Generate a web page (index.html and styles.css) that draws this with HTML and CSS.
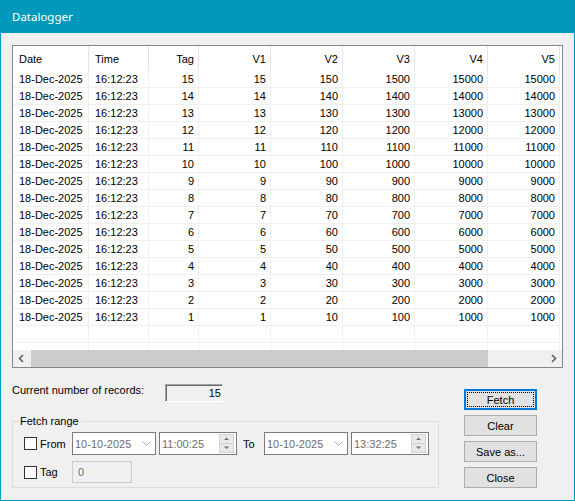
FILE: index.html
```html
<!DOCTYPE html>
<html>
<head>
<meta charset="utf-8">
<title>Datalogger</title>
<link rel="stylesheet" href="styles.css">
</head>
<body>
<div class="window">
  <div class="titlebar">Datalogger</div>
  <div class="client">
    <div class="listview">
      <div class="row head">
        <div class="c">Date</div><div class="c">Time</div><div class="c r">Tag</div><div class="c r">V1</div><div class="c r">V2</div><div class="c r">V3</div><div class="c r">V4</div><div class="c r">V5</div>
      </div>
      <div class="lv-body">
        <div class="row"><div class="c">18-Dec-2025</div><div class="c">16:12:23</div><div class="c r">15</div><div class="c r">15</div><div class="c r">150</div><div class="c r">1500</div><div class="c r">15000</div><div class="c r">15000</div></div>
        <div class="row"><div class="c">18-Dec-2025</div><div class="c">16:12:23</div><div class="c r">14</div><div class="c r">14</div><div class="c r">140</div><div class="c r">1400</div><div class="c r">14000</div><div class="c r">14000</div></div>
        <div class="row"><div class="c">18-Dec-2025</div><div class="c">16:12:23</div><div class="c r">13</div><div class="c r">13</div><div class="c r">130</div><div class="c r">1300</div><div class="c r">13000</div><div class="c r">13000</div></div>
        <div class="row"><div class="c">18-Dec-2025</div><div class="c">16:12:23</div><div class="c r">12</div><div class="c r">12</div><div class="c r">120</div><div class="c r">1200</div><div class="c r">12000</div><div class="c r">12000</div></div>
        <div class="row"><div class="c">18-Dec-2025</div><div class="c">16:12:23</div><div class="c r">11</div><div class="c r">11</div><div class="c r">110</div><div class="c r">1100</div><div class="c r">11000</div><div class="c r">11000</div></div>
        <div class="row"><div class="c">18-Dec-2025</div><div class="c">16:12:23</div><div class="c r">10</div><div class="c r">10</div><div class="c r">100</div><div class="c r">1000</div><div class="c r">10000</div><div class="c r">10000</div></div>
        <div class="row"><div class="c">18-Dec-2025</div><div class="c">16:12:23</div><div class="c r">9</div><div class="c r">9</div><div class="c r">90</div><div class="c r">900</div><div class="c r">9000</div><div class="c r">9000</div></div>
        <div class="row"><div class="c">18-Dec-2025</div><div class="c">16:12:23</div><div class="c r">8</div><div class="c r">8</div><div class="c r">80</div><div class="c r">800</div><div class="c r">8000</div><div class="c r">8000</div></div>
        <div class="row"><div class="c">18-Dec-2025</div><div class="c">16:12:23</div><div class="c r">7</div><div class="c r">7</div><div class="c r">70</div><div class="c r">700</div><div class="c r">7000</div><div class="c r">7000</div></div>
        <div class="row"><div class="c">18-Dec-2025</div><div class="c">16:12:23</div><div class="c r">6</div><div class="c r">6</div><div class="c r">60</div><div class="c r">600</div><div class="c r">6000</div><div class="c r">6000</div></div>
        <div class="row"><div class="c">18-Dec-2025</div><div class="c">16:12:23</div><div class="c r">5</div><div class="c r">5</div><div class="c r">50</div><div class="c r">500</div><div class="c r">5000</div><div class="c r">5000</div></div>
        <div class="row"><div class="c">18-Dec-2025</div><div class="c">16:12:23</div><div class="c r">4</div><div class="c r">4</div><div class="c r">40</div><div class="c r">400</div><div class="c r">4000</div><div class="c r">4000</div></div>
        <div class="row"><div class="c">18-Dec-2025</div><div class="c">16:12:23</div><div class="c r">3</div><div class="c r">3</div><div class="c r">30</div><div class="c r">300</div><div class="c r">3000</div><div class="c r">3000</div></div>
        <div class="row"><div class="c">18-Dec-2025</div><div class="c">16:12:23</div><div class="c r">2</div><div class="c r">2</div><div class="c r">20</div><div class="c r">200</div><div class="c r">2000</div><div class="c r">2000</div></div>
        <div class="row"><div class="c">18-Dec-2025</div><div class="c">16:12:23</div><div class="c r">1</div><div class="c r">1</div><div class="c r">10</div><div class="c r">100</div><div class="c r">1000</div><div class="c r">1000</div></div>
        <div class="row"><div class="c"></div><div class="c"></div><div class="c"></div><div class="c"></div><div class="c"></div><div class="c"></div><div class="c"></div><div class="c"></div></div>
        <div class="row"><div class="c"></div><div class="c"></div><div class="c"></div><div class="c"></div><div class="c"></div><div class="c"></div><div class="c"></div><div class="c"></div></div>
      </div>
      <div class="hscroll">
        <div class="sb-btn"><svg width="17" height="17" viewBox="0 0 17 17"><polyline points="10,5 6.5,8.5 10,12" fill="none" stroke="#606060" stroke-width="1.6"/></svg></div>
        <div class="sb-thumb"></div>
        <div class="sb-btn"><svg width="17" height="17" viewBox="0 0 17 17"><polyline points="7,5 10.5,8.5 7,12" fill="none" stroke="#606060" stroke-width="1.6"/></svg></div>
      </div>
    </div>

    <div class="lower">
      <div class="left">
        <div class="records">
          <span class="rec-label">Current number of records:</span>
          <div class="sunken">15</div>
        </div>
        <fieldset class="group">
          <legend>Fetch range</legend>
          <div class="grow">
            <span class="chk"></span><span class="lbl lbl-from">From</span>
            <div class="field combo"><span class="val">10-10-2025</span><svg class="chev" width="9" height="6" viewBox="0 0 9 6"><polyline points="0.5,0.5 4.5,4.5 8.5,0.5" fill="none" stroke="#a8a8a8" stroke-width="1"/></svg></div>
            <div class="field time"><span class="val">11:00:25</span><svg class="spin" width="15" height="19" viewBox="0 0 15 19"><rect x="0.5" y="0.5" width="14" height="18" fill="#e8e8e8" stroke="#d2d2d2"/><line x1="0.5" y1="9.5" x2="14.5" y2="9.5" stroke="#d2d2d2"/><polygon points="5,6 10,6 7.5,3.5" fill="#707070"/><polygon points="5,12.5 10,12.5 7.5,15" fill="#707070"/></svg></div>
            <span class="lbl lbl-to">To</span>
            <div class="field combo"><span class="val">10-10-2025</span><svg class="chev" width="9" height="6" viewBox="0 0 9 6"><polyline points="0.5,0.5 4.5,4.5 8.5,0.5" fill="none" stroke="#a8a8a8" stroke-width="1"/></svg></div>
            <div class="field time"><span class="val">13:32:25</span><svg class="spin" width="15" height="19" viewBox="0 0 15 19"><rect x="0.5" y="0.5" width="14" height="18" fill="#e8e8e8" stroke="#d2d2d2"/><line x1="0.5" y1="9.5" x2="14.5" y2="9.5" stroke="#d2d2d2"/><polygon points="5,6 10,6 7.5,3.5" fill="#707070"/><polygon points="5,12.5 10,12.5 7.5,15" fill="#707070"/></svg></div>
          </div>
          <div class="grow row2">
            <span class="chk"></span><span class="lbl lbl-from">Tag</span>
            <div class="tagbox">0</div>
          </div>
        </fieldset>
      </div>
      <div class="buttons">
        <div class="btn default">Fetch</div>
        <div class="btn">Clear</div>
        <div class="btn">Save as...</div>
        <div class="btn">Close</div>
      </div>
    </div>
  </div>
</div>
</body>
</html>
```

FILE: styles.css
```css
html, body {
  margin: 0;
  padding: 0;
  background: #f0f0f0;
}
.window {
  width: 575px;
  height: 501px;
  box-sizing: border-box;
  border: 1px solid #0099bc;
  border-top: 0;
  background: #f0f0f0;
  font-family: "Liberation Sans", Arial, sans-serif;
  font-size: 11px;
  color: #000;
  overflow: hidden;
}
.titlebar {
  height: 33px;
  margin: 0 -1px;
  background: #0099bc;
  color: #fff;
  font-family: "Noto Sans", "Open Sans", sans-serif;
  font-size: 11.5px;
  line-height: 33px;
  padding-left: 12px;
}
.client {
  padding: 12px 11px 0 11px;
}
.listview {
  width: 551px;
  height: 323px;
  box-sizing: border-box;
  border: 1px solid #828790;
  background: #fff;
  display: flex;
  flex-direction: column;
}
.row {
  display: grid;
  grid-template-columns: 76px 60px 50px 72px 72px 72px 73px 72px;
  height: 17px;
  flex: none;
}
.row .c {
  box-sizing: border-box;
  border-right: 1px solid #f0f0f0;
  border-bottom: 1px solid #f0f0f0;
  line-height: 15px;
  padding: 1px 4px 0 6px;
  white-space: nowrap;
  overflow: hidden;
}
.row .r {
  text-align: right;
}
.row.head {
  height: 25px;
}
.row.head .c {
  border-bottom: 0;
  border-right-color: #e5e5e5;
  line-height: 24px;
  background: #fff;
}
.lv-body {
  flex: 1;
  overflow: hidden;
  display: flex;
  flex-direction: column;
}
.hscroll {
  height: 17px;
  flex: none;
  background: #f0f0f0;
  display: flex;
}
.sb-btn {
  width: 17px;
  height: 17px;
}
.sb-btn svg {
  display: block;
}
.sb-thumb {
  width: 457px;
  margin-left: 1px;
  background: #cdcdcd;
}
.hscroll .sb-btn:last-child {
  margin-left: auto;
}

.lower {
  display: flex;
}
.left {
  width: 427px;
}
.records {
  margin-top: 16px;
  height: 18px;
  display: flex;
  align-items: flex-start;
}
.rec-label {
  width: 153px;
  line-height: 13px;
}
.sunken {
  width: 58px;
  height: 18px;
  box-sizing: border-box;
  border: 1px solid;
  border-color: #a0a0a0 #ffffff #ffffff #a0a0a0;
  box-shadow: inset 1px 1px 0 #696969;
  text-align: right;
  padding-right: 1px;
  line-height: 16px;
}
.group {
  margin: 12px 0 0 0;
  width: 427px;
  box-sizing: border-box;
  border: 1px solid #dcdcdc;
  padding: 4px 0 4px 5px;
  min-width: 0;
}
.group legend {
  padding: 0 2px;
  line-height: 14px;
  font-size: 11px;
}
.grow {
  display: flex;
  align-items: center;
  height: 23px;
  padding-left: 6px;
}
.grow.row2 {
  margin-top: 6px;
  height: 22px;
}
.chk {
  width: 13px;
  height: 13px;
  box-sizing: border-box;
  border: 1px solid #333;
  background: #fff;
  flex: none;
}
.lbl {
  flex: none;
}
.lbl-from {
  margin-left: 3px;
  width: 32px;
}
.lbl-to {
  margin-left: 6px;
  width: 21px;
}
.field {
  height: 23px;
  box-sizing: border-box;
  border: 1px solid #7a7a7a;
  background: #fff;
  display: flex;
  align-items: center;
  flex: none;
  color: #6d6d6d;
}
.field .val {
  padding-left: 2px;
}
.combo {
  width: 84px;
}
.combo .chev {
  margin-left: auto;
  margin-right: 4px;
  margin-top: 1px;
}
.time {
  width: 78px;
  margin-left: 3px;
}
.time .spin {
  margin-left: auto;
  margin-right: 2px;
  display: block;
}
.tagbox {
  margin-left: 0;
  width: 60px;
  height: 22px;
  box-sizing: border-box;
  border: 1px solid #cccccc;
  background: #f0f0f0;
  color: #6d6d6d;
  padding-left: 5px;
  line-height: 20px;
}
.buttons {
  margin-left: 25px;
  padding-top: 21px;
  display: flex;
  flex-direction: column;
  gap: 5px;
}
.btn {
  width: 73px;
  height: 21px;
  box-sizing: border-box;
  border: 1px solid #adadad;
  background: #e1e1e1;
  text-align: center;
  line-height: 19px;
  padding-top: 1px;
}
.btn.default {
  border: 2px solid #0078d7;
  line-height: 16px;
  outline: 1px dotted #000;
  outline-offset: -4px;
}
```
